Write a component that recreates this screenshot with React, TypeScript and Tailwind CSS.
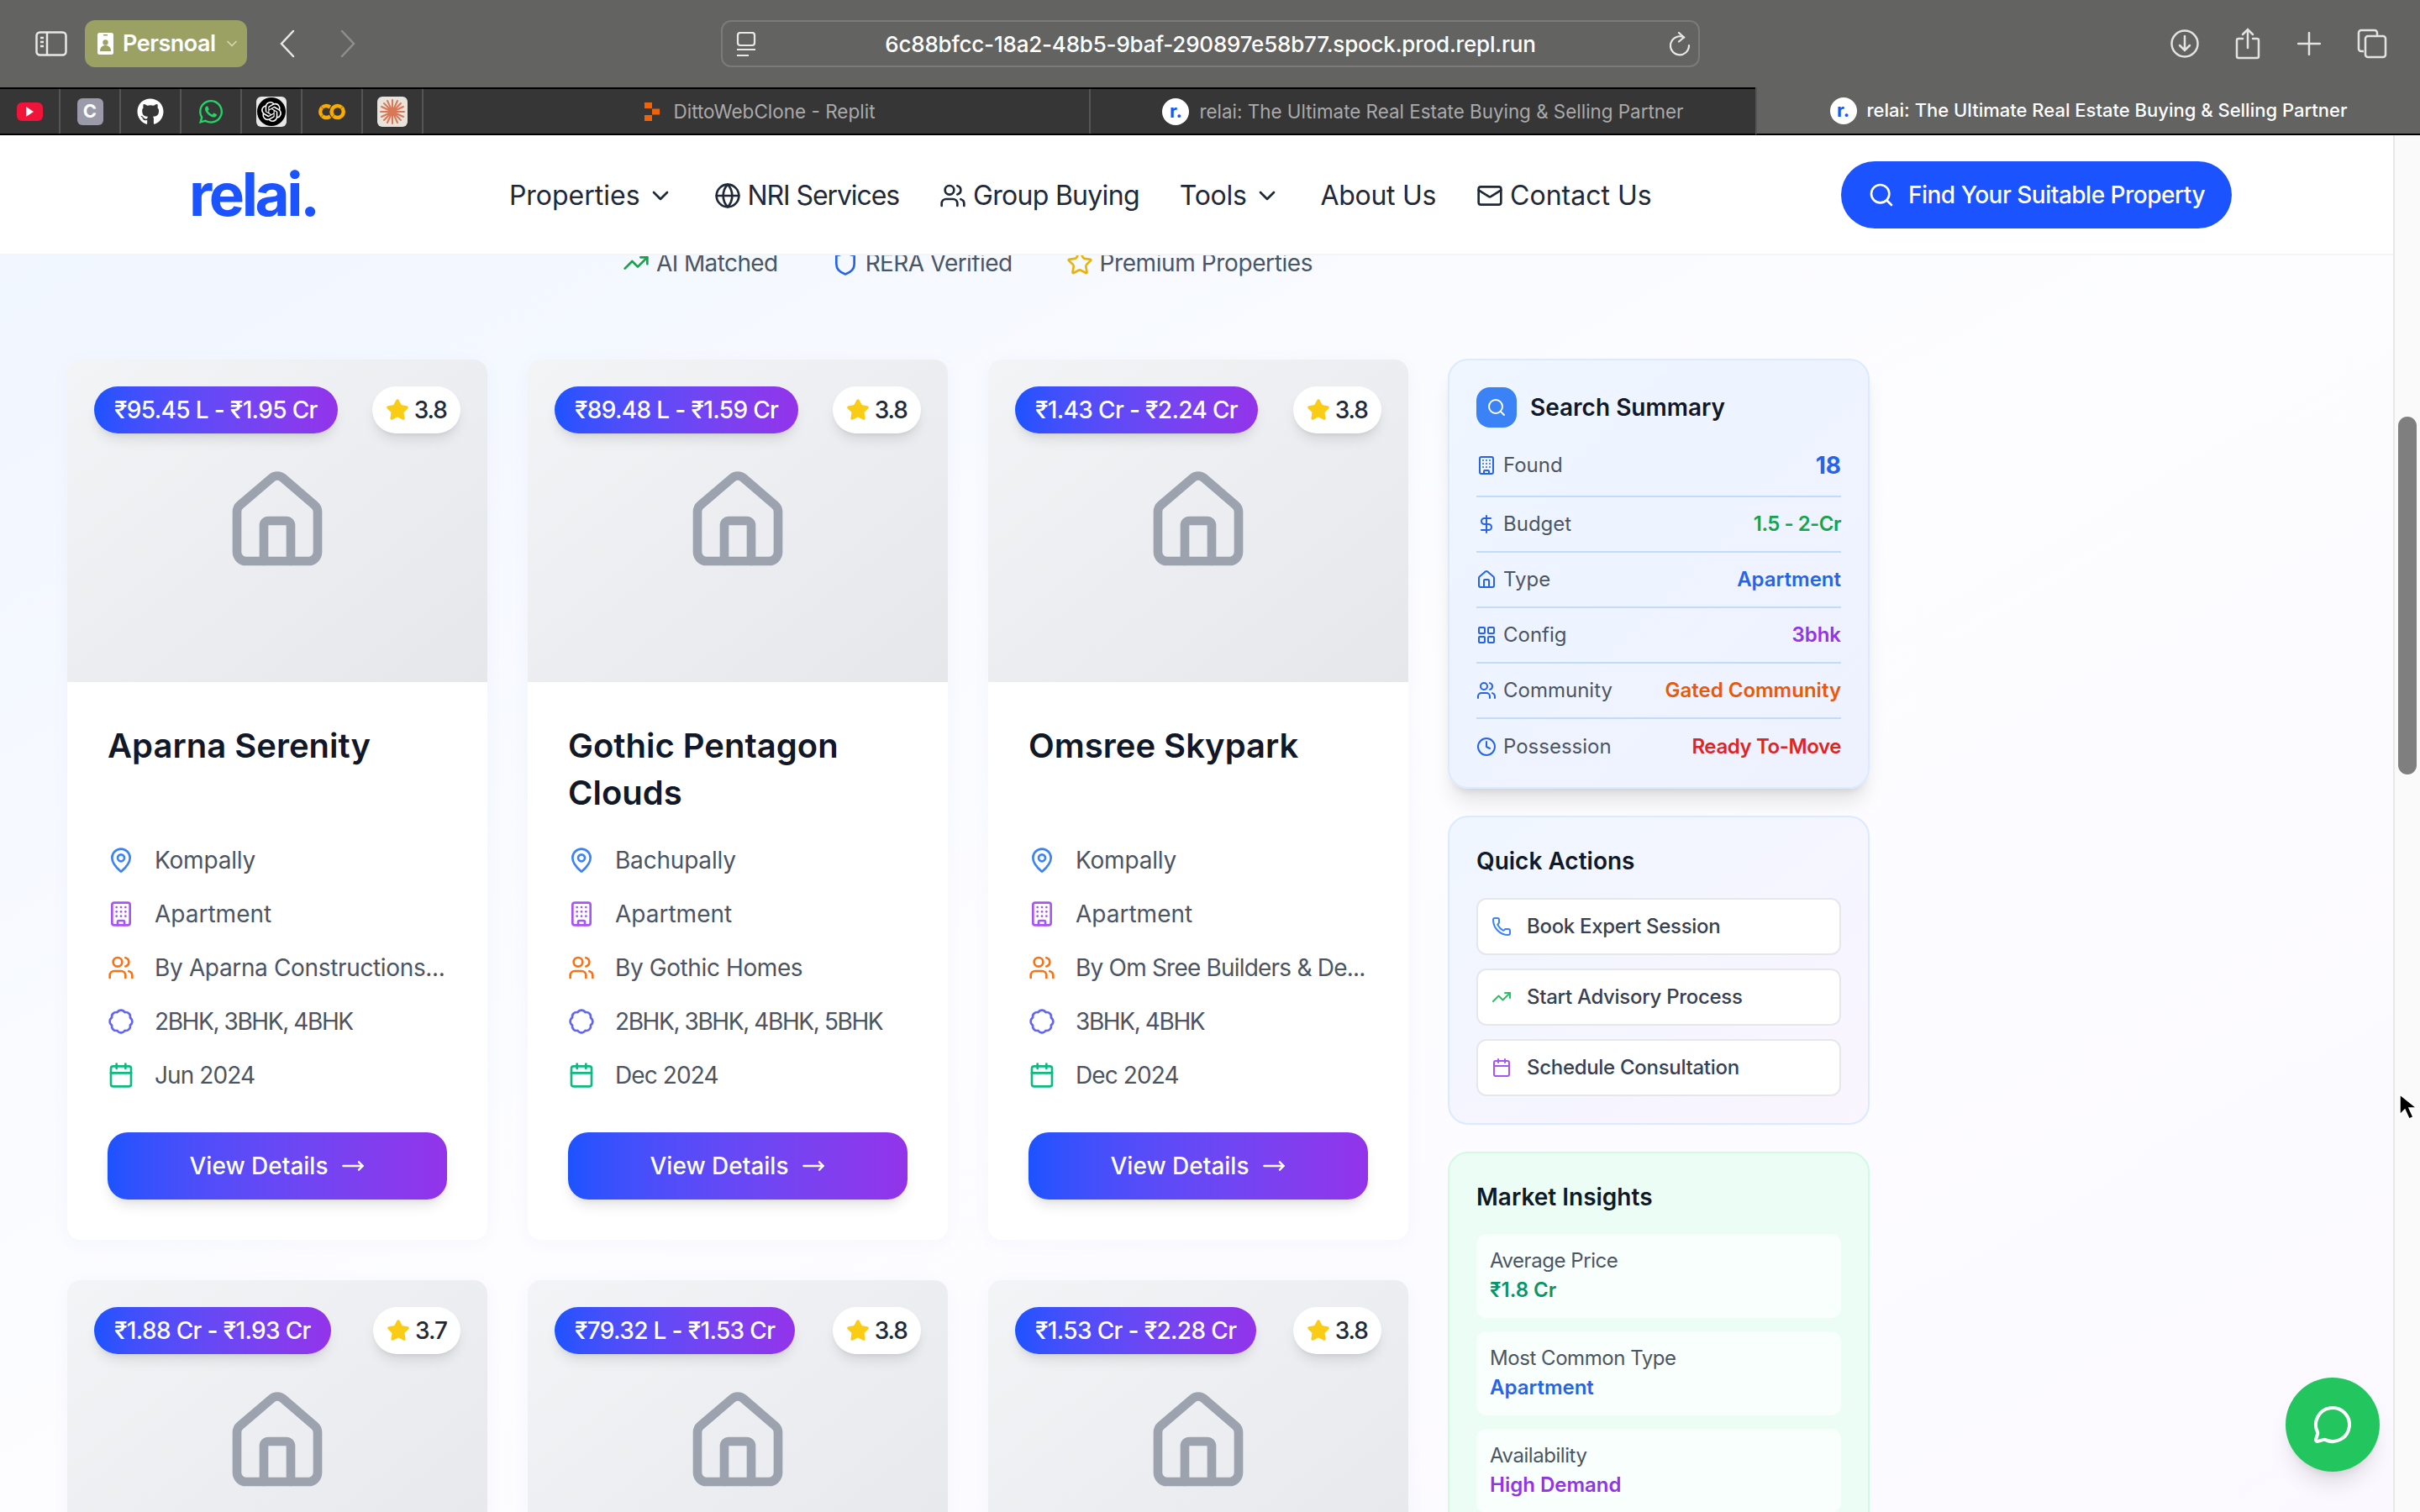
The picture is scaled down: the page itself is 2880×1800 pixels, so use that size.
import {
  Badge,
  Building,
  Calendar,
  ChevronDown,
  Clock,
  DollarSign,
  Globe,
  House,
  LayoutGrid,
  Mail,
  MapPin,
  MessageCircle,
  MoveRight,
  Phone,
  Search,
  Shield,
  Star,
  TrendingUp,
  Users,
} from "lucide-react";
import { FaGithub, FaWhatsapp } from "react-icons/fa";
import { SiGooglecolab, SiOpenai } from "react-icons/si";

type Property = {
  price: string;
  rating: string;
  name?: string;
  location?: string;
  builder?: string;
  builderClass?: string;
  config?: string;
  date?: string;
};

const properties: Property[] = [
  { price: "₹95.45 L - ₹1.95 Cr", rating: "3.8", name: "Aparna Serenity", location: "Kompally", builder: "By Aparna Constructions...", builderClass: "tracking-[-0.35px]", config: "2BHK, 3BHK, 4BHK", date: "Jun 2024" },
  { price: "₹89.48 L - ₹1.59 Cr", rating: "3.8", name: "Gothic Pentagon Clouds", location: "Bachupally", builder: "By Gothic Homes", builderClass: "tracking-[-0.4px]", config: "2BHK, 3BHK, 4BHK, 5BHK", date: "Dec 2024" },
  { price: "₹1.43 Cr - ₹2.24 Cr", rating: "3.8", name: "Omsree Skypark", location: "Kompally", builder: "By Om Sree Builders & De...", builderClass: "tracking-[-0.8px]", config: "3BHK, 4BHK", date: "Dec 2024" },
  { price: "₹1.88 Cr - ₹1.93 Cr", rating: "3.7" },
  { price: "₹79.32 L - ₹1.53 Cr", rating: "3.8" },
  { price: "₹1.53 Cr - ₹2.28 Cr", rating: "3.8" },
];

const summaryRows = [
  { label: "Found", value: "18", icon: Building, valueClass: "text-[28px] leading-10 font-bold text-[#2563eb]", rowClass: "py-4 border-b-2 border-[#bfdbfe]" },
  { label: "Budget", value: "1.5 - 2-Cr", icon: DollarSign, valueClass: "text-[24px] leading-8 font-semibold tracking-[-0.5px] text-[#16a34a]", rowClass: "py-4 border-b-2 border-[#bfdbfe]" },
  { label: "Type", value: "Apartment", icon: House, valueClass: "text-[24px] leading-8 font-semibold text-[#2563eb]", rowClass: "py-4 border-b-2 border-[#bfdbfe]" },
  { label: "Config", value: "3bhk", icon: LayoutGrid, valueClass: "text-[24px] leading-8 font-semibold text-[#9333ea]", rowClass: "py-4 border-b-2 border-[#bfdbfe]" },
  { label: "Community", value: "Gated Community", icon: Users, valueClass: "text-[24px] leading-8 font-semibold text-[#ea580c]", rowClass: "py-4 border-b-2 border-[#bfdbfe]" },
  { label: "Possession", value: "Ready To-Move", icon: Clock, valueClass: "text-[24px] leading-8 font-semibold tracking-[-0.4px] text-[#dc2626]", rowClass: "pt-[17px]" },
];

const PinnedTab = ({ children }: { children: React.ReactNode }) => (
  <div className="flex h-full w-[72px] items-center justify-center border-r-2 border-[#555555]">{children}</div>
);

const BrowserChrome = () => (
  <div className="shrink-0 font-[Inter,sans-serif]">
    <div className="flex h-[104px] items-center bg-[#636362] pl-[42px]">
      <svg width="38" height="30" viewBox="0 0 38 30" fill="none" stroke="#e8e8e8" strokeWidth="2.5">
        <rect x="1.5" y="1.5" width="35" height="27" rx="4" />
        <path d="M14 2v26M6 8h4M6 13h4M6 18h4" />
      </svg>
      <div className="ml-[21px] flex h-14 w-[193px] items-center rounded-xl bg-[#9ba163] pl-[15px]">
        <svg width="19" height="26" viewBox="0 0 19 26" fill="#ffffff">
          <rect x="0" y="0" width="19" height="26" rx="2.5" />
          <rect x="7" y="2" width="5" height="1.5" fill="#9ba163" />
          <circle cx="9.5" cy="11.5" r="3.2" fill="#9ba163" />
          <path d="M3 22c0-5 3-7 6.5-7s6.5 2 6.5 7z" fill="#9ba163" />
        </svg>
        <span className="ml-[11px] text-[27px] font-semibold tracking-[-0.5px] text-white">Persnoal</span>
        <ChevronDown className="ml-[9px] size-5 text-[#d5d8b4]" />
      </div>
      <svg className="ml-[38px]" width="20" height="34" viewBox="0 0 20 34" fill="none" stroke="#e8e8e8" strokeWidth="2.5" strokeLinecap="round">
        <path d="M17 2 3 17l14 15" />
      </svg>
      <svg className="ml-[52px]" width="20" height="34" viewBox="0 0 20 34" fill="none" stroke="#8f8f8f" strokeWidth="2.5" strokeLinecap="round">
        <path d="m3 2 14 15L3 32" />
      </svg>
      <div className="relative ml-[434px] flex h-14 w-[1165px] items-center justify-center rounded-xl border-2 border-[#7b7b7a]">
        <svg className="absolute left-4 top-3" width="24" height="30" viewBox="0 0 24 30" fill="none" stroke="#e8e8e8" strokeWidth="2.2">
          <rect x="2" y="1" width="20" height="15" rx="3" />
          <path d="M1 21h22M1 28h14" />
        </svg>
        <span className="text-[26px] font-medium tracking-[-0.2px] text-white">6c88bfcc-18a2-48b5-9baf-290897e58b77.spock.prod.repl.run</span>
        <svg className="absolute right-2 top-3" width="26" height="30" viewBox="0 0 26 30" fill="none" stroke="#e8e8e8" strokeWidth="2.2" strokeLinecap="round">
          <path d="M17 6.5A11 11 0 1 0 23 16" />
          <path d="m11 1 6 5.5-6 5" />
        </svg>
      </div>
      <svg className="ml-[560px]" width="34" height="36" viewBox="0 0 34 36" fill="none" stroke="#e3e3e3" strokeWidth="2.5" strokeLinecap="round">
        <circle cx="17" cy="18" r="15.5" />
        <path d="M17 9v17M11 20l6 6 6-6" />
      </svg>
      <svg className="ml-[43px]" width="30" height="38" viewBox="0 0 30 38" fill="none" stroke="#e3e3e3" strokeWidth="2.5" strokeLinecap="round">
        <path d="M9 13H4a2 2 0 0 0-2 2v19a2 2 0 0 0 2 2h22a2 2 0 0 0 2-2V15a2 2 0 0 0-2-2h-5" />
        <path d="M15 24V2M9 8l6-6 6 6" />
      </svg>
      <svg className="ml-[44px]" width="28" height="28" viewBox="0 0 28 28" fill="none" stroke="#e3e3e3" strokeWidth="2.5" strokeLinecap="round">
        <path d="M14 1v26M1 14h26" />
      </svg>
      <svg className="ml-[43px]" width="36" height="36" viewBox="0 0 36 36" fill="none" stroke="#e3e3e3" strokeWidth="2.5">
        <path d="M8 27H5a3 3 0 0 1-3-3V5a3 3 0 0 1 3-3h16a3 3 0 0 1 3 3v3" />
        <rect x="10" y="9" width="24" height="25" rx="3" />
      </svg>
    </div>
    <div className="flex h-[57px] bg-[#363636]">
      <div className="flex w-[2089px] border-y-2 border-black">
        <PinnedTab>
          <div className="flex h-[22px] w-[31px] items-center justify-center rounded-md bg-[#f0133a]">
            <div className="size-0 border-y-[6px] border-l-[9px] border-y-transparent border-l-white" />
          </div>
        </PinnedTab>
        <PinnedTab>
          <div className="flex h-8 w-[31px] items-center justify-center rounded-md bg-[#9a9aa8] text-[22px] font-bold text-white">C</div>
        </PinnedTab>
        <PinnedTab>
          <FaGithub className="size-8 text-white" />
        </PinnedTab>
        <PinnedTab>
          <FaWhatsapp className="size-8 text-[#25d366]" />
        </PinnedTab>
        <PinnedTab>
          <div className="flex size-9 items-center justify-center rounded-md bg-[#e8e8e8]">
            <div className="flex size-[34px] items-center justify-center rounded-full bg-black">
              <SiOpenai className="size-6 text-white" />
            </div>
          </div>
        </PinnedTab>
        <PinnedTab>
          <SiGooglecolab className="size-8 text-[#f9ab00]" />
        </PinnedTab>
        <PinnedTab>
          <div className="flex size-9 items-center justify-center rounded-md bg-[#e8e4dc]">
            <svg width="30" height="30" viewBox="0 0 30 30" stroke="#d97757" strokeWidth="2" strokeLinecap="round">
              <path d="M15 1v28M1 15h28M5 5l20 20M25 5 5 25M9 2l12 26M21 2 9 28M2 9l26 12M28 9 2 21" />
            </svg>
          </div>
        </PinnedTab>
        <div className="flex w-[794px] items-center justify-center gap-4 border-r-2 border-[#555555] pl-[9px]">
          <svg width="18" height="22" viewBox="0 0 18 22" fill="#f26207">
            <rect x="0" y="0" width="9" height="7" />
            <rect x="9" y="7.5" width="9" height="7" />
            <rect x="0" y="15" width="9" height="7" />
          </svg>
          <span className="text-[22.5px] text-[#aaaaaa]">DittoWebClone - Replit</span>
        </div>
        <div className="flex flex-1 items-center justify-center gap-3">
          <div className="flex size-8 items-center justify-center rounded-full bg-white text-[22px] font-bold text-[#1a53ff]">r.</div>
          <span className="text-[22.4px] text-[#aaaaaa]">relai: The Ultimate Real Estate Buying & Selling Partner</span>
        </div>
      </div>
      <div className="flex flex-1 items-center justify-center gap-3 border-b-2 border-l-2 border-b-black border-l-[#555555] bg-[#636362]">
        <div className="flex size-8 items-center justify-center rounded-full bg-white text-[22px] font-bold text-[#1a53ff]">r.</div>
        <span className="text-[22px] font-medium text-white">relai: The Ultimate Real Estate Buying & Selling Partner</span>
      </div>
    </div>
  </div>
);

const NavBar = () => (
  <header className="relative z-10 flex h-[143px] items-center justify-between border-b-2 border-[#f3f4f6] bg-white pl-[225px] pr-[192px]">
    <span className="text-[71px] font-bold leading-none tracking-[-3.4px] text-[#1a53ff]">relai.</span>
    <nav className="ml-[3px] flex items-center gap-12 pt-[2px] text-[32px] tracking-[-0.3px] text-[#1f2937]">
      <span className="flex items-center gap-2">
        <span className="tracking-normal">Properties</span> <ChevronDown className="size-8" />
      </span>
      <span className="flex items-center gap-2">
        <Globe className="size-8" /> <span className="tracking-[-1.1px]">NRI Services</span>
      </span>
      <span className="flex items-center gap-2">
        <Users className="size-8" /> <span className="tracking-[-0.7px]">Group Buying</span>
      </span>
      <span className="flex items-center gap-2">
        Tools <ChevronDown className="size-8" />
      </span>
      <span>About Us</span>
      <span className="flex items-center gap-2">
        <Mail className="size-8" /> <span className="tracking-normal">Contact Us</span>
      </span>
    </nav>
    <button className="flex h-20 items-center gap-4 rounded-full bg-[#1a53ff] px-8 text-[28px] font-medium tracking-[-0.5px] text-white">
      <Search className="size-8" /> Find Your Suitable Property
    </button>
  </header>
);

const TrustStrip = () => (
  <div className="-mt-[11px] flex items-center gap-16 pl-[741px] text-[28px] leading-10 tracking-[-0.6px] text-[#4b5563]">
    <span className="flex items-center gap-2">
      <TrendingUp className="size-8 text-[#16a34a]" /> AI Matched
    </span>
    <span className="flex items-center gap-2">
      <Shield className="size-8 text-[#2563eb]" /> RERA Verified
    </span>
    <span className="flex items-center gap-2 tracking-[-0.4px]">
      <Star className="size-8 text-[#eab308]" /> Premium Properties
    </span>
  </div>
);

const PropertyCard = ({ property }: { property: Property }) => (
  <div className="overflow-hidden rounded-2xl bg-white shadow-[0_4px_24px_rgba(30,64,175,0.03)]">
    <div className="relative flex h-[384px] items-center justify-center bg-linear-to-br from-[#f3f4f6] to-[#e5e7eb]">
      <House className="size-32 text-[#9ca3af]" />
      <div className="absolute left-8 top-8 flex h-14 items-center rounded-full bg-linear-to-r from-[#1a53ff] to-[#9333ea] px-6 text-[28px] font-medium tracking-[-0.65px] text-white shadow-lg">
        {property.price}
      </div>
      <div className="absolute right-8 top-8 flex h-14 items-center gap-1.5 rounded-full bg-white px-4 text-[28px] font-medium tracking-[-1px] text-[#1f2937] shadow-lg">
        <Star className="size-7 fill-[#facc15] text-[#facc15]" />
        {property.rating}
      </div>
    </div>
    {property.name && (
      <div className="p-12">
        <h3 className="mb-9 h-[112px] text-[40px] font-semibold leading-[56px] text-[#111827]">{property.name}</h3>
        <div className="flex flex-col gap-8 text-[28px] leading-8 text-[#4b5563]">
          <div className="flex items-center gap-6 tracking-[-0.2px]">
            <MapPin className="size-8 shrink-0 text-[#3b82f6]" />
            {property.location}
          </div>
          <div className="flex items-center gap-6">
            <Building className="size-8 shrink-0 text-[#a855f7]" />
            Apartment
          </div>
          <div className={`flex items-center gap-6 whitespace-nowrap ${property.builderClass}`}>
            <Users className="size-8 shrink-0 text-[#f97316]" />
            {property.builder}
          </div>
          <div className="flex items-center gap-6 whitespace-nowrap tracking-[-1.4px]">
            <Badge className="size-8 shrink-0 text-[#6366f1]" />
            {property.config}
          </div>
          <div className="flex items-center gap-6 tracking-[-0.9px]">
            <Calendar className="size-8 shrink-0 text-[#10b981]" />
            {property.date}
          </div>
        </div>
        <button className="mt-[52px] flex h-20 w-full items-center justify-center gap-4 rounded-3xl bg-linear-to-r from-[#1a53ff] to-[#9333ea] text-[28px] font-medium text-white shadow-lg">
          View Details <MoveRight className="size-7" />
        </button>
      </div>
    )}
  </div>
);

const Sidebar = () => (
  <aside className="-mt-px flex w-[502px] shrink-0 flex-col gap-8">
    <div className="rounded-3xl border-2 border-[#dbeafe] bg-linear-to-br from-[#eff6ff] to-[#eef2ff] p-8 shadow-xl">
      <div className="mb-[9px] flex items-center gap-4">
        <div className="flex size-12 items-center justify-center rounded-2xl bg-[#3b82f6]">
          <Search className="size-6 text-white" />
        </div>
        <h3 className="text-[28px] font-semibold text-[#111827]">Search Summary</h3>
      </div>
      {summaryRows.map((row) => (
        <div key={row.label} className={`flex items-center justify-between ${row.rowClass}`}>
          <span className="flex items-center gap-2 text-[24px] leading-8 text-[#4b5563]">
            <row.icon className="size-6 text-[#2563eb]" /> {row.label}
          </span>
          <span className={row.valueClass}>{row.value}</span>
        </div>
      ))}
    </div>

    <div className="rounded-3xl border-2 border-[#dbeafe] bg-linear-to-br from-[#eff6ff] to-[#faf5ff] p-8">
      <h3 className="mb-6 text-[28px] font-semibold leading-10 text-[#111827]">Quick Actions</h3>
      <div className="flex flex-col gap-4">
        <div className="flex h-[68px] items-center gap-[18px] rounded-xl border-2 border-[#e5e7eb] bg-white px-4 text-[24px] font-medium tracking-[-0.3px] text-[#374151]">
          <Phone className="size-6 text-[#3b82f6]" /> Book Expert Session
        </div>
        <div className="flex h-[68px] items-center gap-[18px] rounded-xl border-2 border-[#e5e7eb] bg-white px-4 text-[24px] font-medium tracking-[-0.3px] text-[#374151]">
          <TrendingUp className="size-6 text-[#22c55e]" /> Start Advisory Process
        </div>
        <div className="flex h-[68px] items-center gap-[18px] rounded-xl border-2 border-[#e5e7eb] bg-white px-4 text-[24px] font-medium tracking-[-0.3px] text-[#374151]">
          <Calendar className="size-6 text-[#a855f7]" /> Schedule Consultation
        </div>
      </div>
    </div>

    <div className="rounded-3xl border-2 border-[#d1fae5] bg-[#ecfdf5] p-8">
      <h3 className="mb-6 text-[28px] font-semibold leading-10 text-[#111827]">Market Insights</h3>
      <div className="flex flex-col gap-4">
        <div className="h-[100px] rounded-xl bg-white/70 p-4">
          <div className="text-[24px] leading-8 tracking-[-0.45px] text-[#4b5563]">Average Price</div>
          <div className="mt-px text-[24px] font-semibold leading-9 text-[#059669]">₹1.8 Cr</div>
        </div>
        <div className="h-[100px] rounded-xl bg-white/70 p-4">
          <div className="text-[24px] leading-8 tracking-[-0.45px] text-[#4b5563]">Most Common Type</div>
          <div className="mt-px text-[24px] font-semibold leading-9 text-[#2563eb]">Apartment</div>
        </div>
        <div className="h-[100px] rounded-xl bg-white/70 p-4">
          <div className="text-[24px] leading-8 tracking-[-0.45px] text-[#4b5563]">Availability</div>
          <div className="mt-px text-[24px] font-semibold leading-9 text-[#9333ea]">High Demand</div>
        </div>
      </div>
    </div>
  </aside>
);

const ScrollTrack = () => (
  <div className="relative w-8 shrink-0 border-l-2 border-[#e8e8e8] bg-[#fafafa]">
    <div className="absolute left-[4px] top-[335px] h-[426px] w-[22px] rounded-full bg-[#7f7f7f]" />
    <svg className="absolute left-[4px] top-[1140px]" width="24" height="34" viewBox="0 0 24 34">
      <path d="M2 2v24l6-6 5 11 5-2-5-11h9z" fill="#000000" stroke="#ffffff" strokeWidth="1.5" />
    </svg>
  </div>
);

const App = () => {
  return (
    <div className="flex h-[1800px] w-[2880px] flex-col overflow-hidden font-[Inter,sans-serif]">
      <BrowserChrome />
      <div className="flex min-h-0 flex-1">
        <main className="relative min-w-0 flex-1 overflow-hidden bg-linear-to-br from-[#eff5ff] via-[#fdfdff] to-[#fbf9ff]">
          <NavBar />
          <TrustStrip />
          <div className="mt-[95px] flex items-start gap-[47px] pl-20">
            <div className="grid w-[1596px] shrink-0 grid-cols-3 gap-12">
              {properties.map((property) => (
                <PropertyCard key={property.price} property={property} />
              ))}
            </div>
            <Sidebar />
          </div>
          <button className="absolute bottom-[48px] right-4 flex size-28 items-center justify-center rounded-full bg-[#22c55e] text-white shadow-xl">
            <MessageCircle className="size-12" />
          </button>
        </main>
        <ScrollTrack />
      </div>
    </div>
  );
};

export default App;
